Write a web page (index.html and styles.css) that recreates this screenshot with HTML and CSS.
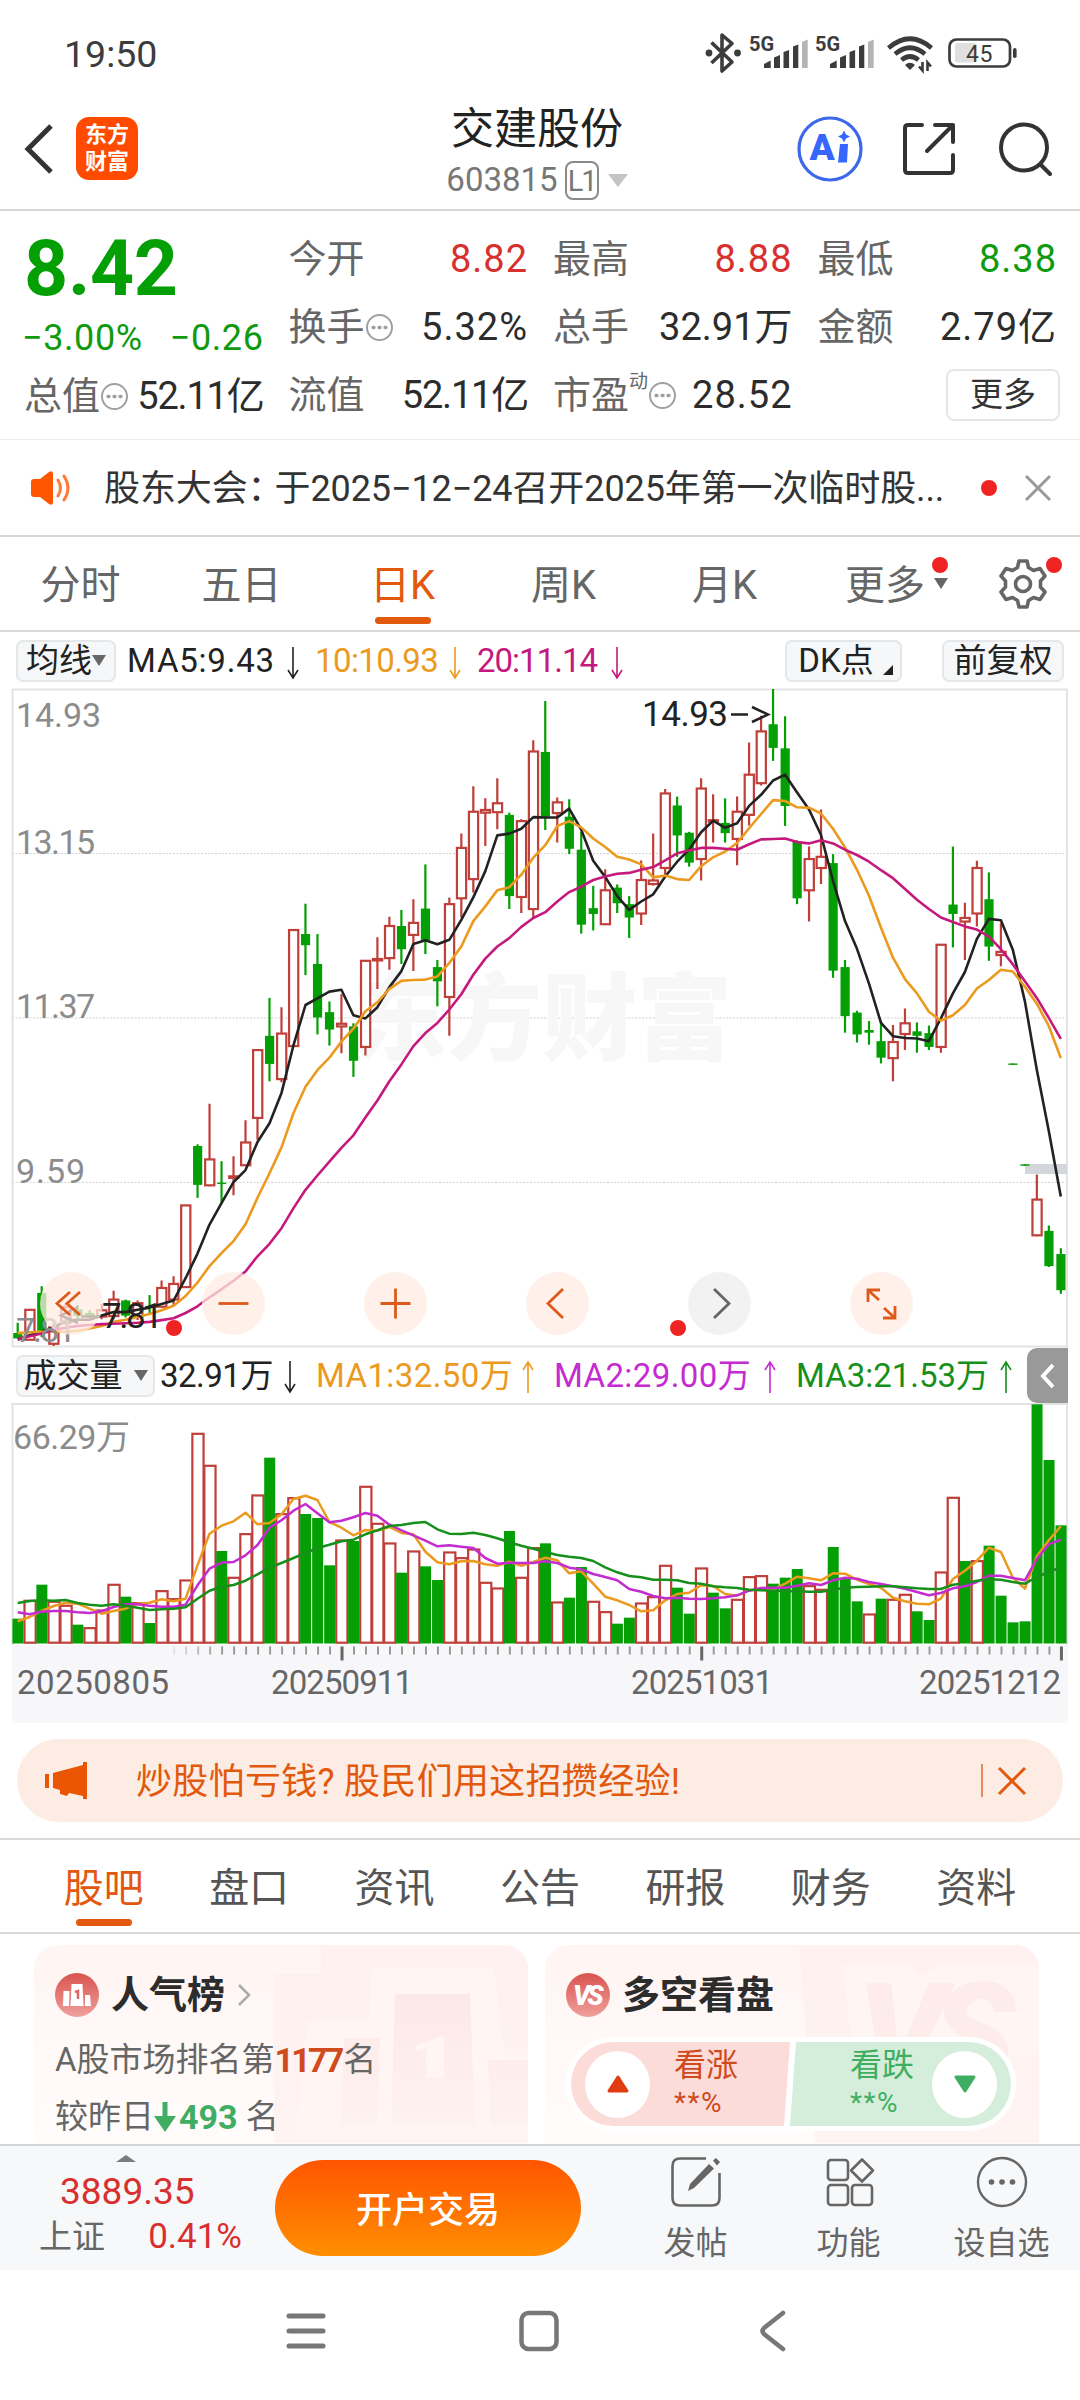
FILE: index.html
```html
<!DOCTYPE html>
<html lang="zh-CN">
<head>
    <meta charset="UTF-8">
    <meta name="viewport" content="width=device-width, initial-scale=1.0">
    <title>交建股份 603815</title>
    <link rel="stylesheet" href="styles.css">
</head>
<body>

<div class="status">
    <div class="time">19:50</div>
    <svg class="status-icons" width="320" height="50" viewBox="0 0 320 50">
        <path d="M11.5 14.5 L32 34 L22 43 V7 L32 15.5 L11.5 35" fill="none" stroke="#3c3c3c" stroke-width="3.6" stroke-linejoin="round"/>
        <circle cx="9" cy="25" r="3.4" fill="#3c3c3c"/>
        <circle cx="37.5" cy="25" r="3.4" fill="#3c3c3c"/>
        <text class="g5" x="49" y="22.5">5G</text>
        <path d="M64 40v-4l6.700-3.500V40zM74 40V29.500l6-2.500v13zM83.500 40V24l5.600-2v18zM93 40V18.500l5.300-2V40z" fill="#3c3c3c"/>
        <path d="M102 40V14l5.700-2.500V40z" fill="#b5b5b5"/>
        <text class="g5" x="115" y="22.5">5G</text>
        <path d="M130 40v-4l6.700-3.500V40zM140 40V29.500l6-2.500v13zM149.500 40V24l5.600-2v18zM159 40V18.500l5.300-2V40z" fill="#3c3c3c"/>
        <path d="M168 40V14l5.700-2.500V40z" fill="#b5b5b5"/>
        <g fill="none" stroke="#3c3c3c" stroke-width="4.6">
            <path d="M188.500 20 Q210 1.500 231.500 20"/>
            <path d="M195 26 Q210 13.500 225 26"/>
            <path d="M201.500 32 Q210 25 218.500 32"/>
        </g>
        <path d="M205 37 Q210 32.500 215 37 L210 42z" fill="#3c3c3c"/>
        <path d="M222.500 34v8.500l-3.500-4M227.500 43v-8.500l3.500 4" fill="none" stroke="#3c3c3c" stroke-width="2.6"/>
        <rect x="255" y="15" width="22" height="19.5" rx="3" fill="#e0e0e0"/>
        <rect x="249.5" y="11.5" width="60.5" height="27" rx="7" fill="none" stroke="#3c3c3c" stroke-width="2.7"/>
        <rect x="313" y="20" width="3.6" height="10" rx="1.8" fill="#3c3c3c"/>
        <text class="battery" x="266" y="33.5">45</text>
    </svg>
</div>

<header class="header">
    <div class="header-left">
        <svg width="32" height="52" viewBox="0 0 32 52"><path d="M28 3 L5 26 L28 49" fill="none" stroke="#333" stroke-width="5"/></svg>
        <div class="logo"><span>东方</span><span>财富</span></div>
    </div>
    <div class="header-title">
        <h1>交建股份</h1>
        <div class="code">603815<span class="level">L1</span><svg width="20" height="13" viewBox="0 0 20 13"><path d="M0 0h20L10 13z" fill="#c4c4c4"/></svg></div>
    </div>
    <div class="header-right">
        <svg width="66" height="66" viewBox="0 0 66 66">
            <circle cx="33" cy="33" r="31" fill="none" stroke="#3d68ea" stroke-width="3.2"/>
            <text class="ai" x="12.5" y="44">A</text>
            <path d="M43 28h8l-1 18.500h-9z" fill="#3766ff"/>
            <path d="M47 14.500l2 4 4 2-4 2-2 4-2-4-4-2 4-2z" fill="#3766ff"/>
        </svg>
        <svg class="share" width="54" height="54" viewBox="0 0 54 54" fill="none" stroke="#333" stroke-width="4" stroke-linecap="round" stroke-linejoin="round">
            <path d="M20 3H6Q3 3 3 6V48Q3 51 6 51H48Q51 51 51 48V33"/>
            <path d="M33 3H51V20M51 3L25 29"/>
        </svg>
        <svg width="54" height="54" viewBox="0 0 54 54" fill="none" stroke="#333" stroke-width="4" stroke-linecap="round">
            <circle cx="26" cy="25.5" r="23"/>
            <path d="M43 43L52 52"/>
        </svg>
    </div>
</header>

<section class="quote">
    <div class="quote-col">
        <div class="price">8.42</div>
        <div class="change"><span>−3.00%</span><span>−0.26</span></div>
        <div class="cell"><label>总值</label><i class="info"></i><b class="tight">52.11亿</b></div>
    </div>
    <div class="quote-col">
        <div class="cell"><label>今开</label><b class="up">8.82</b></div>
        <div class="cell"><label>换手</label><i class="info"></i><b>5.32%</b></div>
        <div class="cell"><label>流值</label><b class="tight">52.11亿</b></div>
    </div>
    <div class="quote-col">
        <div class="cell"><label>最高</label><b class="up">8.88</b></div>
        <div class="cell"><label>总手</label><b class="even">32.91万</b></div>
        <div class="cell"><label>市盈<sup>动</sup></label><i class="info"></i><b>28.52</b></div>
    </div>
    <div class="quote-col">
        <div class="cell"><label>最低</label><b class="down">8.38</b></div>
        <div class="cell"><label>金额</label><b>2.79亿</b></div>
        <div class="cell"><button class="more">更多</button></div>
    </div>
</section>

<section class="notice">
    <svg width="42" height="34" viewBox="0 0 42 34">
        <path d="M0 11q0-3 3-3h6L18 1q4-2 4 2v28q0 4-4 2L9 26H3q-3 0-3-3z" fill="#ff5600"/>
        <path d="M27 9q5 8 0 16M33 5q8 12 0 24" fill="none" stroke="#ff7a38" stroke-width="3" stroke-linecap="round"/>
    </svg>
    <p>股东大会<span class="colon">：</span>于2025−12−24召开2025年第一次临时股...</p>
    <i class="dot"></i>
    <svg width="28" height="28" viewBox="0 0 28 28"><path d="M2 2L26 26M26 2L2 26" stroke="#999" stroke-width="3"/></svg>
</section>

<nav class="period">
    <a>分时</a>
    <a>五日</a>
    <a class="active">日K</a>
    <a>周K</a>
    <a>月K</a>
    <a class="more-k has-dot">更多<svg width="14" height="11" viewBox="0 0 14 11"><path d="M0 0h14L7 11z" fill="#666"/></svg></a>
    <a class="gear has-dot">
        <svg width="50" height="50" viewBox="0 0 50 50" fill="none" stroke="#666" stroke-width="3.6" stroke-linejoin="round">
            <path d="M21 2h8l1.500 6.500 5 3L42 9.500l5 7.500-4.500 5v6L47 33l-5 7.500-6.500-2-5 3L29 48h-8l-1.500-6.500-5-3-6.500 2L3 33l4.500-5v-6L3 17l5-7.500 6.500 2 5-3z"/>
            <circle cx="25" cy="25" r="7.5"/>
        </svg>
    </a>
</nav>

<div class="ma-bar">
    <button class="chip ma-chip">均线<svg width="14" height="11" viewBox="0 0 14 11"><path d="M0 0h14L7 11z" fill="#666"/></svg></button>
    <span class="ma5">MA5:9.43</span><svg class="arrow" width="14" height="34" viewBox="0 0 14 34"><path d="M7 1V31M2 24L7 32L12 24"/></svg>
    <span class="ma10">10:10.93</span><svg class="arrow ma10" width="14" height="34" viewBox="0 0 14 34"><path d="M7 1V31M2 24L7 32L12 24"/></svg>
    <span class="ma20">20:11.14</span><svg class="arrow ma20" width="14" height="34" viewBox="0 0 14 34"><path d="M7 1V31M2 24L7 32L12 24"/></svg>
    <button class="chip dk">DK点<svg width="10" height="10" viewBox="0 0 10 10"><path d="M10 0v10H0z" fill="#222"/></svg></button>
    <button class="chip adjust">前复权</button>
</div>

<div class="kline">
    <svg id="kline" width="1080" height="660" viewBox="0 0 1080 660"></svg>
    <div class="tools">
        <button><svg viewBox="0 0 63 63"><path d="M30 20L17 31.500L30 43M40 20L27 31.500L40 43"/></svg></button>
        <button><svg viewBox="0 0 63 63"><path d="M16.500 31.500h30"/></svg></button>
        <button><svg viewBox="0 0 63 63"><path d="M16.500 31.500h30M31.500 16.500v30"/></svg></button>
        <button><svg viewBox="0 0 63 63"><path d="M37 17L22 31.500L37 46"/></svg></button>
        <button class="off"><svg viewBox="0 0 63 63"><path d="M26 17L41 31.500L26 46"/></svg></button>
        <button><svg viewBox="0 0 63 63"><path d="M18 30V18H30M18 18L29 28M45 34V46H33M45 46L34 36"/></svg></button>
    </div>
    <i class="dot dot-left"></i>
    <i class="dot dot-right"></i>
</div>

<div class="vol-bar">
    <button class="chip vol-chip">成交量<svg width="14" height="11" viewBox="0 0 14 11"><path d="M0 0h14L7 11z" fill="#666"/></svg></button>
    <span class="v0">32.91万</span><svg class="arrow" width="14" height="34" viewBox="0 0 14 34"><path d="M7 1V31M2 24L7 32L12 24"/></svg>
    <span class="v1">MA1:32.50万</span><svg class="arrow v1" width="14" height="34" viewBox="0 0 14 34"><path d="M7 2V33M2 10L7 2L12 10"/></svg>
    <span class="v2">MA2:29.00万</span><svg class="arrow v2" width="14" height="34" viewBox="0 0 14 34"><path d="M7 2V33M2 10L7 2L12 10"/></svg>
    <span class="v3">MA3:21.53万</span><svg class="arrow v3" width="14" height="34" viewBox="0 0 14 34"><path d="M7 2V33M2 10L7 2L12 10"/></svg>
    <button class="fold"><svg width="16" height="26" viewBox="0 0 16 26"><path d="M13 2L3 13L13 24" fill="none" stroke="#fff" stroke-width="4"/></svg></button>
</div>

<svg id="volume" class="volume" width="1080" height="320" viewBox="0 0 1080 320"></svg>

<div class="banner">
    <svg width="42" height="37" viewBox="0 0 42 37">
        <path d="M0 12h4v14H0zM8 11L38 3V0h4v37h-4v-3l-14-3-2 3-7-2v-4l-7-2z" fill="#ea5504"/>
    </svg>
    <p>炒股怕亏钱? 股民们用这招攒经验!</p>
    <i class="bar"></i>
    <svg width="30" height="30" viewBox="0 0 30 30"><path d="M2 2L28 28M28 2L2 28" stroke="#e2580d" stroke-width="3"/></svg>
</div>

<nav class="tabs">
    <a class="active">股吧</a>
    <a>盘口</a>
    <a>资讯</a>
    <a>公告</a>
    <a>研报</a>
    <a>财务</a>
    <a>资料</a>
</nav>

<section class="cards">
    <div class="card">
        <svg class="card-bg" width="494" height="198" viewBox="0 0 494 198">
            <defs><linearGradient id="fade" x1="0" y1="0" x2="0" y2="1"><stop offset="0" stop-color="#fbe4e3"/><stop offset="1" stop-color="#fdf1ef"/></linearGradient></defs>
            <path d="M287 0H494V198H240V29h47z" fill="#feefed" opacity=".6"/>
            <path d="M337 24H460L470 112H494V198H260L274 76h61z" fill="#fff6f4"/>
            <path d="M361 49h75l5 131h-84zM310 93h36l-3 87h-36zM454 115h40v65h-38z" fill="url(#fade)" opacity=".75"/>
            <path d="M382 100l28-9v42h-18v-30l-10 3z" fill="#fff6f4"/>
        </svg>
        <h2>
            <svg width="44" height="44" viewBox="0 0 44 44">
                <defs><linearGradient id="red" x1="0" y1="0" x2="0" y2="1"><stop offset="0" stop-color="#d9534f"/><stop offset="1" stop-color="#f0a09c"/></linearGradient></defs>
                <circle cx="22" cy="22" r="22" fill="url(#red)"/>
                <path d="M8.500 18h6l-.5 15h-6zM16.500 11h11l1 22h-13zM30 22h5l1 11h-6z" fill="#fff"/>
                <path d="M20 19l3-1v8" fill="none" stroke="#dc6763" stroke-width="2.5"/>
            </svg>
            人气榜
            <svg class="go" width="14" height="22" viewBox="0 0 14 22"><path d="M2 1L12 11L2 21" fill="none" stroke="#aaa" stroke-width="2.5"/></svg>
        </h2>
        <p class="rank">A股市场排名第<b>1177</b>名</p>
        <p class="diff">较昨日<svg width="22" height="30" viewBox="0 0 22 30"><path d="M8.500 0h5v14H22L11 30L0 14h8.500z" fill="#3fae62"/></svg><b>493</b> 名</p>
    </div>
    <div class="card">
        <svg class="card-bg" width="494" height="198" viewBox="0 0 494 198">
            <path d="M254 0H494V198H270z" fill="#feefed" opacity=".6"/>
            <path d="M298 20h66l10 12 20-12h100v90H308z" fill="#fff6f4"/>
            <text class="vs-big" x="312" y="137">VS</text>
        </svg>
        <h2>
            <svg width="44" height="44" viewBox="0 0 44 44">
                <circle cx="22" cy="22" r="22" fill="url(#red)"/>
                <text class="vs" x="7" y="32">VS</text>
            </svg>
            多空看盘
        </h2>
        <div class="vote">
            <div class="bull">
                <span class="ball"><svg width="22" height="18" viewBox="0 0 22 18"><path d="M11 2L20 16H2z" fill="#e03c12" stroke="#e03c12" stroke-width="3" stroke-linejoin="round"/></svg></span>
                <p>看涨<small>**%</small></p>
            </div>
            <div class="bear">
                <p>看跌<small>**%</small></p>
                <span class="ball"><svg width="22" height="18" viewBox="0 0 22 18"><path d="M11 16L2 2H20z" fill="#3fae62" stroke="#3fae62" stroke-width="3" stroke-linejoin="round"/></svg></span>
            </div>
        </div>
    </div>
</section>

<footer class="bottom">
    <div class="index">
        <svg width="20" height="7" viewBox="0 0 20 7"><path d="M10 0L20 7H0z" fill="#7c7c7e"/></svg>
        <div class="point">3889.35</div>
        <div class="index-row"><span>上证</span><b>0.41%</b></div>
    </div>
    <button class="open">开户交易</button>
    <div class="action">
        <svg width="52" height="52" viewBox="0 0 52 52">
            <path d="M36 2.500H10Q2.500 2.500 2.500 10V42Q2.500 49.500 10 49.500H42Q49.500 49.500 49.500 42V17" fill="none" stroke="#666" stroke-width="2.6"/>
            <path d="M39 8l5 4.500L24 32l-6 3 2-7zM43 4.500l3-2.500 4 4-3 3.500z" fill="#666"/>
        </svg>
        发帖
    </div>
    <div class="action">
        <svg width="52" height="52" viewBox="0 0 52 52" fill="none" stroke="#666" stroke-width="2.6" stroke-linejoin="round">
            <rect x="5" y="4" width="20" height="20" rx="3"/>
            <rect x="5" y="29" width="20" height="20" rx="3"/>
            <rect x="29" y="29" width="20" height="20" rx="3"/>
            <path d="M39 3.500L50 14.500L39 25.500L28 14.500z"/>
        </svg>
        功能
    </div>
    <div class="action">
        <svg width="52" height="52" viewBox="0 0 52 52">
            <circle cx="26" cy="26" r="24" fill="none" stroke="#666" stroke-width="2.4"/>
            <circle cx="15.5" cy="26" r="2.8" fill="#666"/><circle cx="26" cy="26" r="2.8" fill="#666"/><circle cx="36.5" cy="26" r="2.8" fill="#666"/>
        </svg>
        设自选
    </div>
</footer>

<div class="sysnav">
    <svg width="40" height="42" viewBox="0 0 40 42"><path d="M3 6H37M3 21H37M3 36H37" stroke="#777" stroke-width="5" stroke-linecap="round"/></svg>
    <svg width="40" height="42" viewBox="0 0 40 42"><rect x="2.5" y="3" width="35" height="36" rx="7" fill="none" stroke="#777" stroke-width="4.5"/></svg>
    <svg width="28" height="42" viewBox="0 0 28 42"><path d="M24 3L5 18Q2 21 5 24L24 39" fill="none" stroke="#777" stroke-width="4.5" stroke-linecap="round"/></svg>
</div>

<script src="chart.js"></script>
</body>
</html>
```

FILE: styles.css
```css
* {
    box-sizing: border-box;
}

body {
    margin: 0;
    width: 1080px;
    height: 2400px;
    overflow: hidden;
    background: #fff;
    color: #333;
    font-family: Roboto, "Noto Sans CJK SC", sans-serif;
    font-weight: 400;
}

svg {
    display: block;
    flex-shrink: 0;
}

h1, h2, p {
    margin: 0;
    font-weight: 400;
}

button {
    border: none;
    padding: 0;
    margin: 0;
    font-family: inherit;
    color: inherit;
}

b {
    font-weight: 400;
}

.dot {
    width: 16px;
    height: 16px;
    border-radius: 50%;
    background: #f02323;
}

/* 状态栏 */
.status {
    height: 80px;
    padding: 28px 60px 0 64px;
    display: flex;
    justify-content: space-between;
}

.time {
    font-size: 37.5px;
    line-height: 52px;
    color: #3c3c3c;
}

.g5 {
    font-size: 20px;
    font-weight: 700;
    fill: #3c3c3c;
}

.battery {
    font-size: 23px;
    letter-spacing: 0.5px;
    fill: #3c3c3c;
}

/* 顶部标题 */
.header {
    height: 131px;
    border-bottom: 2px solid #d6d6d6;
    padding: 0 28px 0 23px;
    display: flex;
    justify-content: space-between;
}

.header-left,
.header-right {
    width: 300px;
    display: flex;
}

.header-left {
    padding-top: 43px;
    align-items: flex-start;
}

.header-right {
    padding-top: 9px;
    align-items: center;
    justify-content: flex-end;
}

.logo {
    width: 62px;
    height: 63px;
    margin: -6px 0 0 21px;
    border-radius: 13px;
    background: #ff4a00;
    color: #fff;
    font-size: 22px;
    font-weight: 700;
    line-height: 27px;
    padding-top: 4px;
    display: flex;
    flex-direction: column;
    align-items: center;
}

.header-title {
    padding-top: 24px;
    margin-left: -1px;
    text-align: center;
}

.header-title h1 {
    font-size: 43px;
    line-height: 50px;
    color: #222;
}

.code {
    margin-top: 6px;
    display: flex;
    align-items: center;
    justify-content: center;
    font-size: 33px;
    line-height: 40px;
    color: #777;
}

.level {
    width: 34px;
    height: 39px;
    margin: 0 9px 0 7px;
    border: 2px solid #8a8a8a;
    border-radius: 8px;
    font-size: 29px;
    line-height: 36px;
    letter-spacing: -2px;
}

.share {
    margin: 0 42px 0 39px;
}

.ai {
    font-family: Roboto, sans-serif;
    font-size: 37px;
    font-weight: 900;
    fill: #3766ff;
}

/* 行情 */
.quote {
    height: 229px;
    padding: 14px 23px 0 24px;
    display: flex;
    gap: 25px;
    border-bottom: 1px solid #eee;
}

.quote-col {
    flex: 1;
}

.price {
    height: 88px;
    line-height: 89px;
    font-size: 77px;
    font-weight: 700;
    letter-spacing: -0.3px;
    color: #049f04;
}

.change {
    height: 49px;
    line-height: 51px;
    margin: 0 0 0 -2px;
    display: flex;
    justify-content: space-between;
    font-size: 36px;
    letter-spacing: 0.6px;
    color: #109a10;
}

.cell {
    height: 68px;
    display: flex;
    align-items: center;
    font-size: 38px;
    line-height: 68px;
    white-space: nowrap;
}

.cell label {
    color: #666;
    position: relative;
}

.cell b {
    margin-left: auto;
    letter-spacing: 1px;
    color: #2c2c2c;
}

.cell .even {
    letter-spacing: 0;
}

.cell .tight {
    letter-spacing: -1.2px;
}

.cell .up {
    color: #d8302f;
}

.cell .down {
    color: #109a10;
}

.cell sup {
    font-size: 19px;
    line-height: 20px;
    vertical-align: 20px;
}

.info {
    width: 27px;
    height: 27px;
    margin-left: 1px;
    border: 2px solid #a0a0a0;
    border-radius: 50%;
    background: radial-gradient(circle, #999 1.6px, transparent 2.2px) 0 0 / 6px 23px;
    background-position: 2.5px 0;
    background-clip: content-box;
    padding: 0 2px;
}

.more {
    width: 114px;
    height: 52px;
    margin-left: auto;
    margin-right: -3px;
    border: 2px solid #e6e6e6;
    border-radius: 8px;
    background: #fff;
    font-size: 33px;
    line-height: 46px;
}

/* 公告 */
.notice {
    height: 97px;
    padding: 0 28px 0 31px;
    display: flex;
    align-items: center;
    border-bottom: 2px solid #d9d9d9;
}

.notice p {
    flex: 1;
    margin: 3px 0 0 31px;
    font-size: 36px;
    line-height: 60px;
    letter-spacing: -0.1px;
    white-space: nowrap;
}

.colon {
    margin-right: -9px;
}

.notice .dot {
    margin-right: 27px;
}

/* 周期 */
.period {
    height: 95px;
    display: flex;
    border-bottom: 2px solid #d9d9d9;
    font-size: 40px;
    line-height: 98px;
    color: #666;
}

.period a {
    width: 161px;
    display: flex;
    justify-content: center;
    position: relative;
}

.period a.active,
.tabs a.active {
    color: #e2580d;
}

.period a.active::after,
.tabs a.active::after {
    content: "";
    position: absolute;
    left: 50%;
    bottom: 6px;
    width: 56px;
    height: 7px;
    margin-left: -28px;
    border-radius: 4px;
    background: #e2580d;
}

.period .more-k {
    padding-left: 22px;
}

.period a svg {
    margin: 41px 0 0 9px;
}

.period .gear {
    width: 114px;
}

.period .gear svg {
    margin: 22px 0 0 0;
}

.has-dot::before {
    content: "";
    position: absolute;
    top: 20px;
    right: 18px;
    width: 16px;
    height: 16px;
    border-radius: 50%;
    background: #f02323;
}

/* 均线 */
.ma-bar {
    height: 56px;
    padding: 1px 16px 0 16px;
    display: flex;
    align-items: center;
    font-size: 33px;
    line-height: 40px;
    color: #222;
}

.chip {
    height: 42px;
    border: 2px solid #e5e7e9;
    border-radius: 7px;
    background: #f6f7f9;
    display: flex;
    align-items: center;
    justify-content: center;
    font-size: 33px;
    line-height: 38px;
    color: #222;
}

.ma-chip {
    width: 100px;
    margin-right: 11px;
}

.ma-bar span {
    width: 150px;
    letter-spacing: 0.8px;
    white-space: nowrap;
}

.ma-bar span.ma10,
.ma-bar span.ma20 {
    width: 124px;
    letter-spacing: -0.6px;
}

.ma-bar span.ma20 {
    letter-spacing: -1px;
}

.ma-bar .arrow {
    margin: 4px 15px 0 9px;
}

.arrow {
    fill: none;
    stroke: currentColor;
    stroke-width: 1.6;
}

.ma10,
.v1 {
    color: #eb9a1e;
}

.ma20 {
    color: #c5197d;
}

.dk {
    width: 117px;
    margin-left: auto;
}

.dk svg {
    margin: 18px -4px 0 9px;
}

.adjust {
    width: 122px;
    margin-left: 40px;
}

/* K线 */
.kline {
    height: 660px;
    position: relative;
}

.tools {
    position: absolute;
    left: 40px;
    top: 584px;
    display: flex;
    gap: 99px;
}

.tools button {
    width: 63px;
    height: 63px;
    border-radius: 50%;
    background: rgba(255, 236, 225, 0.75);
}

.tools svg {
    fill: none;
    stroke: #dd5a1c;
    stroke-width: 2.8;
}

.tools .off {
    background: #f2f2f2;
}

.tools .off svg {
    stroke: #666;
}

.kline .dot {
    position: absolute;
    top: 632px;
}

.dot-left {
    left: 166px;
}

.dot-right {
    left: 670px;
}

.axis {
    font-size: 34px;
    fill: #8c8c8c;
}

.mark {
    font-size: 35px;
    fill: #222;
}

.watermark {
    font-size: 95px;
    font-weight: 900;
    fill: #f7f7f7;
}

/* 成交量 */
.vol-bar {
    height: 55px;
    padding: 0 12px 0 16px;
    display: flex;
    align-items: center;
    font-size: 33px;
    line-height: 40px;
    color: #222;
    white-space: nowrap;
}

.vol-chip {
    width: 139px;
    margin-right: 5px;
}

.vol-chip svg {
    margin-left: 11px;
}

.vol-bar .arrow {
    margin: 2px 19px 0 12px;
}

.vol-bar .v0 {
    width: 111px;
    letter-spacing: -0.5px;
}

.vol-bar span.v1,
.vol-bar span.v2 {
    width: 193px;
    letter-spacing: 0.4px;
}

.vol-bar .arrow.v1,
.vol-bar .arrow.v2 {
    margin: 2px 19px 0 12px;
}

.vol-bar span.v2 {
    width: 197px;
}

.vol-bar span.v3 {
    width: 191px;
}

.v2 {
    color: #c42bd0;
}

.v3 {
    color: #16901a;
}

.vol-bar .arrow.v3 {
    margin-right: 0;
}

.fold {
    width: 41px;
    height: 55px;
    margin-left: auto;
    border-radius: 10px 0 0 10px;
    background: #999;
    display: flex;
    align-items: center;
    justify-content: center;
}

.date {
    font-size: 33px;
    fill: #666;
}

/* 广告条 */
.banner {
    height: 83px;
    margin: 16px 17px;
    padding: 0 36px 0 28px;
    border-radius: 42px;
    background: #fdece3;
    display: flex;
    align-items: center;
    color: #e2580d;
}

.banner p {
    flex: 1;
    margin: 3px 0 0 49px;
    font-size: 36px;
    line-height: 60px;
    letter-spacing: 0.3px;
}

.banner .bar {
    width: 2px;
    height: 33px;
    margin-right: 14px;
    background: #e58a5a;
}

/* 资讯栏目 */
.tabs {
    height: 96px;
    padding: 0 31px;
    border-top: 2px solid #d9d9d9;
    border-bottom: 2px solid #d9d9d9;
    display: flex;
    font-size: 40px;
    line-height: 97px;
    color: #555;
}

.tabs a {
    flex: 1;
    text-align: center;
    position: relative;
}

.cards {
    height: 210px;
    padding: 11px 41px 0 34px;
    display: flex;
    gap: 17px;
    overflow: hidden;
}

.card {
    width: 494px;
    height: 220px;
    padding: 25px 21px 0;
    border-radius: 24px;
    background: linear-gradient(#fff5f3, #fffdfc);
    position: relative;
    overflow: hidden;
}

.card-bg {
    position: absolute;
    left: 0;
    top: 0;
}

.card h2 {
    height: 50px;
    display: flex;
    align-items: center;
    gap: 12px;
    font-size: 38px;
    font-weight: 700;
    line-height: 50px;
    color: #2c2c2c;
    position: relative;
}

.vs {
    font-size: 27px;
    font-weight: 900;
    font-style: italic;
    letter-spacing: -3px;
    fill: #fff;
}

.vs-big {
    font-size: 138px;
    font-weight: 900;
    font-style: italic;
    letter-spacing: -14px;
    fill: #fdecea;
}

.rank,
.diff {
    margin-top: 17px;
    display: flex;
    align-items: center;
    font-size: 33px;
    line-height: 46px;
    color: #666;
    position: relative;
    white-space: pre;
}

.diff {
    margin-top: 11px;
}

.diff svg {
    margin: 0 3px 0 0;
}

.rank b {
    margin-right: 2px;
    font-size: 34px;
    font-weight: 700;
    letter-spacing: -2.8px;
    color: #cf4a1c;
}

.diff b {
    font-size: 34px;
    font-weight: 700;
    color: #3fae62;
}

.vote {
    width: 450px;
    height: 94px;
    margin-top: 17px;
    border: 5px solid #fff;
    border-radius: 47px;
    background: #fff;
    display: flex;
    position: relative;
    overflow: hidden;
}

.vote > div {
    display: flex;
    align-items: center;
}

.vote p {
    font-size: 32px;
    line-height: 38px;
}

.vote small {
    display: block;
    font-size: 28px;
    line-height: 38px;
    letter-spacing: 1.5px;
}

.bull {
    width: 219px;
    padding-left: 14px;
    gap: 24px;
    background: #fcdcd9;
    color: #cf4a1c;
    clip-path: polygon(0 0, 100% 0, calc(100% - 6px) 100%, 0 100%);
}

.bear {
    width: 221px;
    padding-right: 14px;
    gap: 18px;
    justify-content: flex-end;
    background: #d5eedc;
    color: #3fae62;
    clip-path: polygon(6px 0, 100% 0, 100% 100%, 0 100%);
}

.ball {
    width: 65px;
    height: 67px;
    border-radius: 50%;
    background: #fff;
    display: flex;
    align-items: center;
    justify-content: center;
}

/* 底部 */
.bottom {
    height: 126px;
    border-top: 2px solid #d4d6d9;
    background: #f7f8fa;
    display: flex;
    color: #666;
}

.index {
    width: 275px;
    padding: 9px 0 0 39px;
}

.index svg {
    margin-left: 77px;
}

.point {
    margin: 7px 0 0 21px;
    font-size: 37px;
    line-height: 46px;
    color: #d8302f;
}

.index-row {
    width: 203px;
    display: flex;
    justify-content: space-between;
    font-size: 33px;
    line-height: 43px;
}

.index-row b {
    font-size: 35px;
    color: #d8302f;
}

.open {
    width: 306px;
    height: 96px;
    margin: 14px 38px 0 0;
    padding-bottom: 3px;
    border-radius: 48px;
    background: linear-gradient(#ff5500, #ff8f00);
    color: #fff;
    font-size: 36px;
    font-weight: 500;
}

.action {
    width: 153px;
    padding-top: 10px;
    display: flex;
    flex-direction: column;
    align-items: center;
    font-size: 32px;
    line-height: 70px;
}

.sysnav {
    height: 130px;
    padding: 40px 0 0 286px;
    display: flex;
    gap: 193px;
}

.sysnav svg:last-child {
    margin-left: 7px;
}
```

FILE: chart.js
```js
// Colours
const RED = '#bf3f3a';
const GREEN = '#049f04';

const STEP = 11.99;
const X0 = 17.7;

// [up/down, high, body top, body bottom, low], 20 is 14.93 and 1492 is 7.81
const candles = [
    ['g',1440,1463,1475,1475],['r',1410,1411,1478,1478],['g',1358,1373,1458,1472],['r',1440,1450,1487,1492],
    ['r',1396,1405,1440,1445],['g',1400,1410,1424,1436],['g',1412,1418,1424,1430],['r',1398,1412,1426,1432],
    ['r',1368,1388,1425,1432],['g',1388,1390,1424,1428],['r',1390,1396,1426,1434],['g',1378,1402,1407,1418],
    ['r',1345,1362,1404,1406],['r',1336,1353,1388,1400],['r',1177,1177,1360,1360],['g',1040,1044,1131,1160],
    ['r',949,1074,1132,1134],['g',1078,1126,1129,1170],['r',1067,1112,1115,1154],['r',986,1036,1087,1088],
    ['r',828,829,981,1030],['g',712,797,860,899],['r',733,792,894,901],['r',560,560,820,820],
    ['g',501,569,594,661],['g',569,636,756,794],['g',720,744,783,819],['r',704,770,776,836],
    ['g',769,776,853,889],['r',629,629,822,841],['r',576,625,628,692],['r',530,551,623,649],
    ['g',515,551,603,636],['r',491,544,571,652],['g',413,512,583,614],['g',627,643,675,731],
    ['r',487,502,710,797],['r',344,376,489,532],['r',238,295,446,476],['r',265,291,297,372],
    ['r',220,276,296,334],['g',297,302,484,513],['r',312,316,486,522],['r',135,160,513,534],
    ['g',47,161,306,336],['r',263,274,298,364],['g',267,306,378,390],['g',340,380,548,568],
    ['g',461,511,524,561],['r',424,471,547,547],['g',458,465,500,522],['g',484,502,532,578],
    ['r',404,448,523,549],['r',344,449,457,460],['r',244,254,421,440],['g',261,281,348,396],
    ['g',340,342,409,418],['r',220,243,401,449],['r',256,314,317,364],['g',265,320,343,364],
    ['r',261,295,356,415],['r',140,212,302,326],['r',80,115,231,236],['g',20,99,152,181],
    ['g',81,153,282,327],['g',359,362,489,502],['r',373,401,471,541],['r',290,396,421,457],
    ['g',390,410,651,667],['g',627,643,753,790],['g',741,745,794,812],['g',764,784,790,817],
    ['g',765,809,846,859],['r',773,811,847,899],['r',736,769,793,829],['g',767,787,797,835],
    ['g',774,791,822,829],['r',592,593,822,835],['g',373,503,524,599],['r',499,533,541,627],
    ['r',405,421,523,552],['g',431,491,597,629],['r',545,609,616,641],['g',859,859,862,862],
    ['g',1085,1085,1088,1088],['r',1108,1164,1244,1246],['g',1222,1234,1313,1315],['g',1273,1286,1367,1375]
];

const ma5 = [1478,1468,1460,1450,1436,1433,1433,1424,1416,1416,1411,1406,1398,1390,1340,1285,1220,1172,1125,1098,1035,993,925,818,728,713,698,694,751,758,733,688,652,591,583,592,582,537,487,428,348,344,333,307,308,308,288,335,405,441,484,515,496,480,440,407,380,341,315,331,321,282,257,225,212,252,290,347,450,540,602,680,768,798,802,803,809,758,702,654,580,535,538,605,720,873,1010,1157];
const ma10 = [1463,1461,1460,1460,1460,1458,1453,1447,1438,1433,1427,1420,1412,1402,1380,1350,1313,1284,1257,1219,1160,1105,1047,970,911,874,846,810,781,742,722,692,674,672,671,664,634,597,540,507,471,464,436,398,370,327,316,330,355,374,396,402,413,442,438,446,448,417,397,384,365,332,300,269,271,285,286,299,333,375,425,483,555,622,670,702,743,763,751,728,691,672,649,653,687,725,775,847];
const ma20 = [1476,1470,1464,1456,1451,1447,1445,1443,1442,1441,1440,1438,1434,1430,1418,1403,1383,1365,1346,1325,1291,1263,1228,1183,1142,1110,1079,1048,1020,980,942,899,861,820,791,768,738,704,660,624,597,578,553,533,520,496,475,463,448,440,434,432,425,419,404,388,382,376,376,378,380,368,357,356,355,363,366,359,366,380,392,407,426,444,468,492,513,532,542,552,559,575,603,637,675,712,757,804];

// Volume bars, 101 is the top of the pane (66.29万) and 820 is zero
const vol = ['g745','r689','g643','r692','r704','g763','r771','r718','r641','g679','r696','g758','r660','r684','r628','r188','r284','g542','r620','r489','r373','g262','r429','r381','g431','g443','g585','r508','g512','r347','r458','r517','g607','r541','g588','g629','r544','r561','r535','r635','r652','g482','r620','r531','g519','r694','g682','g590','r692','r723','g760','g742','r697','r678','r584','g652','g730','r592','g667','g714','r686','r618','r615','g640','g622','g596','r645','r656','g530','g623','g693','r730','g685','r686','r671','g723','g749','r604','r380','g572','r570','g526','g676','g756','g753','g102','g269','g465'];
const vma1 = [753,740,722,707,697,700,715,730,722,715,700,697,687,693,685,585,490,466,453,427,462,458,432,386,376,389,455,472,495,479,481,470,488,492,544,576,582,573,572,582,586,574,586,575,562,570,609,603,640,679,690,704,723,720,690,671,667,645,647,671,676,660,656,658,640,619,624,630,609,610,628,641,652,682,693,700,702,685,626,601,571,532,545,622,655,558,510,468];
const vma2 = [726,732,724,722,722,726,728,723,710,702,702,706,709,709,703,645,595,577,575,555,524,472,450,421,401,429,456,451,441,428,436,463,480,495,511,528,525,529,533,563,580,577,578,578,573,578,592,597,611,620,630,656,664,677,684,682,685,686,684,681,675,661,653,652,652,646,639,644,630,622,625,635,641,648,655,665,675,668,654,648,635,616,616,623,630,566,522,508];
const vma3 = [698,692,690,691,689,698,703,706,702,706,712,719,717,715,711,685,661,649,644,631,612,592,578,563,548,533,523,513,508,492,480,467,464,458,455,477,490,491,487,494,504,516,526,535,545,554,559,563,572,591,606,617,621,628,628,630,638,640,648,651,653,658,660,661,662,663,664,664,658,652,650,649,648,648,651,654,656,656,643,639,631,627,628,635,640,620,605,591];

const px = i => X0 + i * STEP;
const py = v => 1 + (v - 20) * 657 / 1472;
const vy = v => (v - 101) / 3 + 1;

function line(data, y, color, width) {
    const points = data.map((v, i) => px(i).toFixed(1) + ',' + y(v).toFixed(1)).join(' ');
    return `<polyline points="${points}" fill="none" stroke="${color}" stroke-width="${width}" stroke-linejoin="round"/>`;
}

function drawKline() {
    let s = '';
    [165.6, 330, 494.3].forEach(y => {
        s += `<path d="M12 ${y}H1067" stroke="#d0d0d0" stroke-width="1" stroke-dasharray="2 1.5"/>`;
    });
    s += '<text class="watermark" x="352" y="365">东方财富</text>';
    s += '<path d="M12.500 1.500H1067V658.500H12.500z" fill="none" stroke="#e3e3e3" stroke-width="2"/>';
    s += '<rect x="1025" y="476" width="42" height="10" fill="#d3d7dc"/>';

    candles.forEach(([type, high, top, bottom, low], i) => {
        const x = px(i);
        const h = Math.max(py(bottom) - py(top), 1.4);
        if (type === 'g') {
            s += `<path d="M${x} ${py(high)}V${py(low)}" stroke="${GREEN}" stroke-width="2.2"/>`;
            s += `<rect x="${x - 4.5}" y="${py(top)}" width="9.2" height="${h}" fill="${GREEN}"/>`;
        } else {
            s += `<path d="M${x} ${py(high)}V${py(top)}M${x} ${py(bottom)}V${py(low)}" stroke="${RED}" stroke-width="2.2"/>`;
            s += `<rect x="${x - 4.4}" y="${py(top)}" width="9.2" height="${h}" fill="#fff" stroke="${RED}" stroke-width="2.2"/>`;
        }
    });

    s += line(ma5, py, '#222', 2.6);
    s += line(ma10, py, '#eb9a1e', 2.6);
    s += line(ma20, py, '#c5197d', 2.6);

    s += '<text class="axis" x="16" y="39" textLength="85">14.93</text>';
    s += '<text class="axis" x="16" y="165.5" textLength="79">13.15</text>';
    s += '<text class="axis" x="16" y="330" textLength="79">11.37</text>';
    s += '<text class="axis" x="16" y="494.5" textLength="69">9.59</text>';
    s += '<text class="axis" x="16" y="654" textLength="60">7.81</text>';
    s += '<text class="mark" x="642" y="37.5" textLength="86">14.93</text>';
    s += '<path d="M731 26.500H748M752 19L768 26.500L752 34" fill="none" stroke="#222" stroke-width="2.5"/>';
    s += '<text class="mark" x="102" y="639.5" textLength="61">7.81</text>';
    s += '<path d="M78 619L61 627.500L78 635M81 628.500H98" fill="none" stroke="#222" stroke-width="2.5"/>';
    document.getElementById('kline').innerHTML = s;
}

function drawVolume() {
    const base = 240.5;
    let s = '<rect x="12" y="242" width="1056" height="78" fill="#f7f7fa"/>';
    s += '<path d="M12.500 242V1H1067V242" fill="none" stroke="#e3e3e3" stroke-width="2"/>';

    vol.forEach((v, i) => {
        const x = px(i);
        const y = vy(Number(v.slice(1)));
        if (v[0] === 'g') {
            s += `<rect x="${x - 5.3}" y="${y}" width="11" height="${base - y}" fill="${GREEN}"/>`;
        } else {
            s += `<rect x="${x - 5.2}" y="${y + 0.8}" width="11.2" height="${base - y - 1.6}" fill="#fff" stroke="${RED}" stroke-width="2.2"/>`;
        }
    });

    s += line(vma1, vy, '#eb9a1e', 2.5);
    s += line(vma2, vy, '#c42bd0', 2.5);
    s += line(vma3, vy, '#16901a', 2.5);

    // date ticks, faded in on the left
    for (let i = 13; i < 88; i++) {
        const big = i === 27 || i === 57 || i === 87;
        const alpha = i < 17 ? (i - 12) / 5 : 1;
        s += `<path d="M${px(i) + 0.6} 243.500v${big ? 14 : 8}" stroke="${big ? '#666' : '#999'}" stroke-width="${big ? 3 : 2}" opacity="${alpha}"/>`;
    }

    s += '<text class="axis" x="13" y="46" textLength="117">66.29万</text>';
    s += '<text class="date" x="17" y="290.5" textLength="152">20250805</text>';
    s += '<text class="date" x="271" y="290.5" textLength="142">20250911</text>';
    s += '<text class="date" x="631" y="290.5" textLength="142">20251031</text>';
    s += '<text class="date" x="919" y="290.5" textLength="142">20251212</text>';
    document.getElementById('volume').innerHTML = s;
}

drawKline();
drawVolume();
```
